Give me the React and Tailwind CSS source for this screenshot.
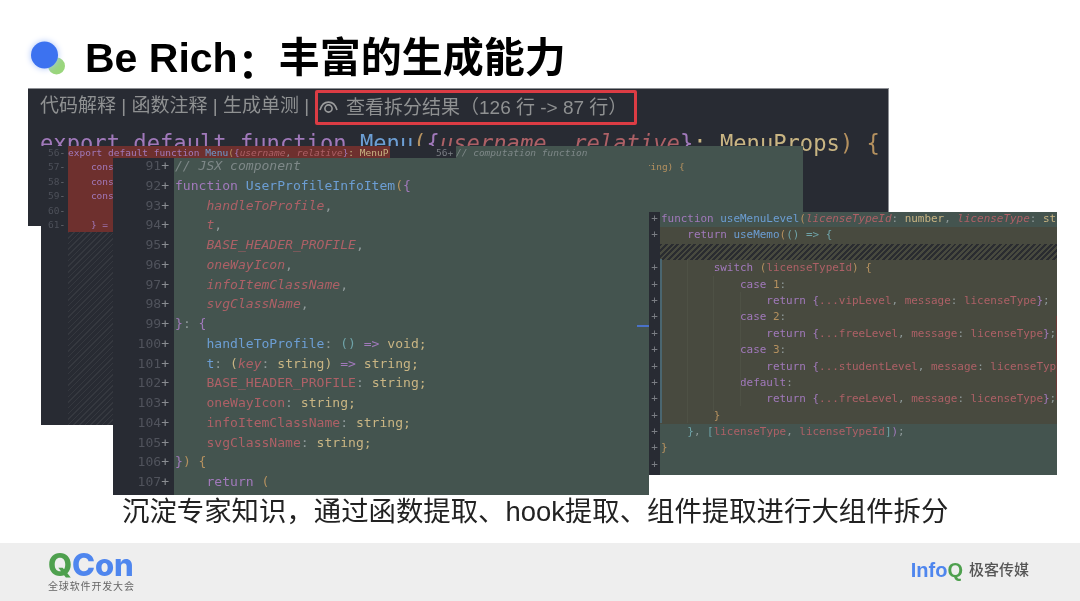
const CJK = 'font-["Liberation_Sans","Noto_Sans_CJK_SC",sans-serif]'
const MONO = 'font-["DejaVu_Sans_Mono","Liberation_Mono",monospace]'

const k = 'text-[#a179bb]'
const f = 'text-[#6c9ed4]'
const v = 'text-[#ad6066]'
const vi = 'text-[#ad6066] italic'
const t = 'text-[#c9b583]'
const o = 'text-[#b5915f]'
const c = 'text-[#7e8888] italic'
const g = 'text-[#8f9a9a]'
const a = 'text-[#6fa3a8]'

const mainLines = [
  [[c, '// JSX component']],
  [[k, 'function '], [f, 'UserProfileInfoItem'], [o, '('], [k, '{']],
  [[vi, '    handleToProfile'], [g, ',']],
  [[vi, '    t'], [g, ',']],
  [[vi, '    BASE_HEADER_PROFILE'], [g, ',']],
  [[vi, '    oneWayIcon'], [g, ',']],
  [[vi, '    infoItemClassName'], [g, ',']],
  [[vi, '    svgClassName'], [g, ',']],
  [[k, '}'], [g, ': '], [k, '{']],
  [[f, '    handleToProfile'], [g, ': '], [a, '() '], [k, '=> '], [t, 'void;']],
  [[f, '    t'], [g, ': '], [t, '('], [vi, 'key'], [g, ': '], [t, 'string) '], [k, '=> '], [t, 'string;']],
  [[v, '    BASE_HEADER_PROFILE'], [g, ': '], [t, 'string;']],
  [[v, '    oneWayIcon'], [g, ': '], [t, 'string;']],
  [[v, '    infoItemClassName'], [g, ': '], [t, 'string;']],
  [[v, '    svgClassName'], [g, ': '], [t, 'string;']],
  [[k, '}'], [o, ') {']],
  [[k, '    return '], [o, '(']],
]

const hookLines = [
  { bg: 'bg-[#44544f]', code: [[k, 'function '], [f, 'useMenuLevel'], [o, '('], [vi, 'licenseTypeId'], [g, ': '], [t, 'number'], [g, ', '], [vi, 'licenseType'], [g, ': '], [t, 'string) {']] },
  { bg: 'bg-[#484a3f]', code: [[k, '    return '], [f, 'useMemo'], [o, '('], [a, '() => {']] },
  { hatch: true },
  { bg: 'bg-[#484a3f]', code: [[k, '        switch '], [o, '('], [v, 'licenseTypeId'], [o, ') {']] },
  { bg: 'bg-[#484a3f]', code: [[k, '            case '], [o, '1'], [g, ':']] },
  { bg: 'bg-[#484a3f]', code: [[k, '                return '], [k, '{'], [v, '...vipLevel'], [g, ', '], [v, 'message'], [g, ': '], [v, 'licenseType'], [k, '}'], [g, ';']] },
  { bg: 'bg-[#484a3f]', code: [[k, '            case '], [o, '2'], [g, ':']] },
  { bg: 'bg-[#484a3f]', code: [[k, '                return '], [k, '{'], [v, '...freeLevel'], [g, ', '], [v, 'message'], [g, ': '], [v, 'licenseType'], [k, '}'], [g, ';']] },
  { bg: 'bg-[#484a3f]', code: [[k, '            case '], [o, '3'], [g, ':']] },
  { bg: 'bg-[#484a3f]', code: [[k, '                return '], [k, '{'], [v, '...studentLevel'], [g, ', '], [v, 'message'], [g, ': '], [v, 'licenseType'], [k, '}'], [g, ';']] },
  { bg: 'bg-[#484a3f]', code: [[k, '            default'], [g, ':']] },
  { bg: 'bg-[#484a3f]', code: [[k, '                return '], [k, '{'], [v, '...freeLevel'], [g, ', '], [v, 'message'], [g, ': '], [v, 'licenseType'], [k, '}'], [g, ';']] },
  { bg: 'bg-[#484a3f]', code: [[o, '        }']] },
  { bg: 'bg-[#44544f]', code: [[a, '    }'], [g, ', '], [a, '['], [v, 'licenseType'], [g, ', '], [v, 'licenseTypeId'], [a, ']'], [k, ')'], [g, ';']] },
  { bg: 'bg-[#44544f]', code: [[o, '}']] },
  { bg: 'bg-[#44544f]', code: [] },
]

const Code = ({ parts }) => parts.map(([cls, text], i) => <span key={i} className={cls}>{text}</span>)

function CodeWindows() {
  return (
    <div className={`relative h-[407px] shrink-0 overflow-hidden ${MONO}`}>
      {/* back window with the big toolbar */}
      <div className="absolute left-[28px] top-0 w-[861px] h-[138px] bg-[#282b33] border-t border-r border-[#8d8f94] overflow-hidden">
        <div className={`flex items-start h-[40px] pl-[12px] pt-[2px] text-[19px] leading-[30px] whitespace-pre text-[#8f9192] ${CJK}`}>
          <span className="w-[275px]">代码解释 | 函数注释 | 生成单测 | </span>
          <div className="flex items-center w-[322px] h-[35px] rounded-[2px] border-[3px] border-[#dc3c44] pl-[1px] -mt-[1px]">
            <svg width="22" height="18" viewBox="0 0 22 18" className="mr-[5px] shrink-0" fill="none" stroke="#9a9b9c" strokeWidth="1.6">
              <path d="M1 11 C4 0.5 15 0.5 18 11" />
              <circle cx="9.5" cy="9.5" r="3.6" />
            </svg>
            <span>查看拆分结果（126 行 -&gt; 87 行）</span>
          </div>
        </div>
        <div className="pl-[12px] mt-[1px] text-[22.15px] leading-[26px] whitespace-pre">
          <Code parts={[[k, 'export default function '], [f, 'Menu'], [o, '('], [k, '{'], [vi, 'username'], [g, ', '], [vi, 'relative'], [k, '}'], [t, ': MenuProps'], [o, ') {']]} />
        </div>
      </div>

      {/* diff window behind the main one */}
      <div className="absolute left-[41px] top-[58px] w-[762px] h-[279px] flex bg-[#282b33] text-[9.5px] leading-[14.4px] whitespace-pre">
        <div className="w-[27px] pl-[7px] text-[#4d5059]">
          {[56, 57, 58, 59, 60, 61].map(n => <div key={n} className="h-[14.4px]">{n}<span className="text-[#6a6d74]">-</span></div>)}
        </div>
        <div className="w-[322px] flex flex-col">
          <div className="bg-[#6e302e] h-[86.4px]">
            <div className="h-[14.4px]"><Code parts={[[k, 'export default function '], [f, 'Menu'], [o, '('], [k, '{'], [vi, 'username'], [g, ', '], [vi, 'relative'], [k, '}'], [t, ': MenuP']]} /></div>
            <div className={`h-[14.4px] ${k}`}>    cons</div>
            <div className={`h-[14.4px] ${k}`}>    cons</div>
            <div className={`h-[14.4px] ${k}`}>    cons</div>
            <div className="h-[14.4px]" />
            <div className={`h-[14.4px] ${k}`}>    {'} ='}</div>
          </div>
          <div className="flex-1 w-[45px] bg-[repeating-linear-gradient(135deg,#35383f_0px,#35383f_1px,#282b33_1px,#282b33_4px)]" />
        </div>
        <div className="w-[66px] pl-[46px] text-[#7a7d84]">56+</div>
        <div className="flex-1 bg-[#44544f]">
          <div className="h-[14.4px] text-[#7e8888] italic">// computation function</div>
          <div className={`h-[14.4px] ${o}`}>{'                                 ring) {'}</div>
        </div>
      </div>

      {/* main extracted component */}
      <div className="absolute left-[113px] top-[70px] w-[536px] h-[337px] flex bg-[#282b33] text-[13.07px] leading-[19.75px] whitespace-pre overflow-hidden">
        <div className="w-[61px] shrink-0 -mt-[2px] pr-[5px] text-right text-[#50535c]">
          {mainLines.map((_, i) => <div key={i} className="h-[19.75px]">{91 + i}<span className="text-[#8a8d92]">+</span></div>)}
        </div>
        <div className="flex-1 bg-[#44544f] pl-[1px]">
          <div className="-mt-[2px]">
            {mainLines.map((line, i) => <div key={i} className="h-[19.75px]"><Code parts={line} /></div>)}
          </div>
        </div>
      </div>
      <div className="absolute left-[637px] top-[237px] w-[12px] h-[2px] bg-[#4a72c8]" />

      {/* hook window on the right */}
      <div className="absolute left-[649px] top-[124px] w-[408px] h-[263px] flex bg-[#282b33] text-[10.95px] leading-[16.4px] whitespace-pre overflow-hidden">
        <div className="w-[11px] shrink-0 -mt-[1px] text-center text-[#7b7e84]">
          {hookLines.map((l, i) => <div key={i} className="h-[16.4px]">{l.hatch ? '' : '+'}</div>)}
        </div>
        <div className="flex-1 min-w-0 -mt-[1px] overflow-hidden">
          {hookLines.map((l, i) => l.hatch
            ? <div key={i} className="h-[16.4px] bg-[repeating-linear-gradient(135deg,#2a2c30_0px,#2a2c30_2px,#484a3f_2px,#484a3f_4px)]" />
            : <div key={i} className={`h-[16.4px] pl-[1px] ${l.bg}`}><Code parts={l.code} /></div>
          )}
          <div className="h-[16px] bg-[#44544f]" />
        </div>
        <div className="absolute left-[11px] top-[47px] w-[2px] h-[164px] bg-[#4a6670]" />
        <div className="absolute left-[38px] top-[47px] w-px h-[164px] bg-[#4e5145]" />
        <div className="absolute left-[64px] top-[64px] w-px h-[135px] bg-[#4e5145]" />
        <div className="absolute left-[91px] top-[80px] w-px h-[114px] bg-[#4e5145]" />
        <div className="absolute right-0 top-[104px] w-px h-[84px] bg-[#6b3a36]" />
      </div>
    </div>
  )
}

export default function App() {
  return (
    <div className={`w-[1080px] h-[601px] flex flex-col bg-white overflow-hidden blur-[0.4px] ${CJK}`}>
      <div className="h-[88px] shrink-0 flex items-center pl-[29px] pt-[28px]">
        <svg width="38" height="36" viewBox="0 0 38 36" className="shrink-0 -mt-[1px] overflow-visible">
          <circle cx="27.5" cy="26" r="8.5" fill="#9ad67c" />
          <ellipse cx="15.5" cy="15" rx="13.5" ry="13.5" fill="#3c72f0" className="drop-shadow-[0_0_3px_#a9c2fa]" />
        </svg>
        <h1 className="ml-[18px] text-[41px] leading-[48px] font-bold text-black whitespace-pre">Be Rich<span className="relative top-[6px]">：</span>丰富的生成能力</h1>
      </div>

      <CodeWindows />

      <div className="h-[48px] shrink-0 pl-[122px] pt-[1px] text-[27.4px] leading-[32px] text-[#222] whitespace-pre">
        沉淀专家知识，通过函数提取、hook提取、组件提取进行大组件拆分
      </div>

      <div className="flex-1 bg-[#eeeeee] flex items-start justify-between pl-[48px] pr-[51px]">
        <div className="flex flex-col w-[86px] pt-[6px]">
          <div className='text-[31px] leading-[31px] font-extrabold tracking-[-0.2px] whitespace-pre font-["Inter",sans-serif]'>
            <span className="text-[#4ea04e]">Q</span><span className="text-[#4f86ee]">Con</span>
          </div>
          <div className="text-[10px] leading-[12px] mt-[1px] tracking-[0.85px] text-[#666] whitespace-pre">全球软件开发大会</div>
        </div>
        <div className="flex items-center pt-[15px]">
          <div className="text-[20px] leading-[24px] font-bold whitespace-pre">
            <span className="text-[#4f86ee]">Info</span><span className="text-[#4ea04e]">Q</span>
          </div>
          <div className="ml-[6px] text-[15px] leading-[24px] font-medium text-[#555]">极客传媒</div>
        </div>
      </div>
    </div>
  )
}
